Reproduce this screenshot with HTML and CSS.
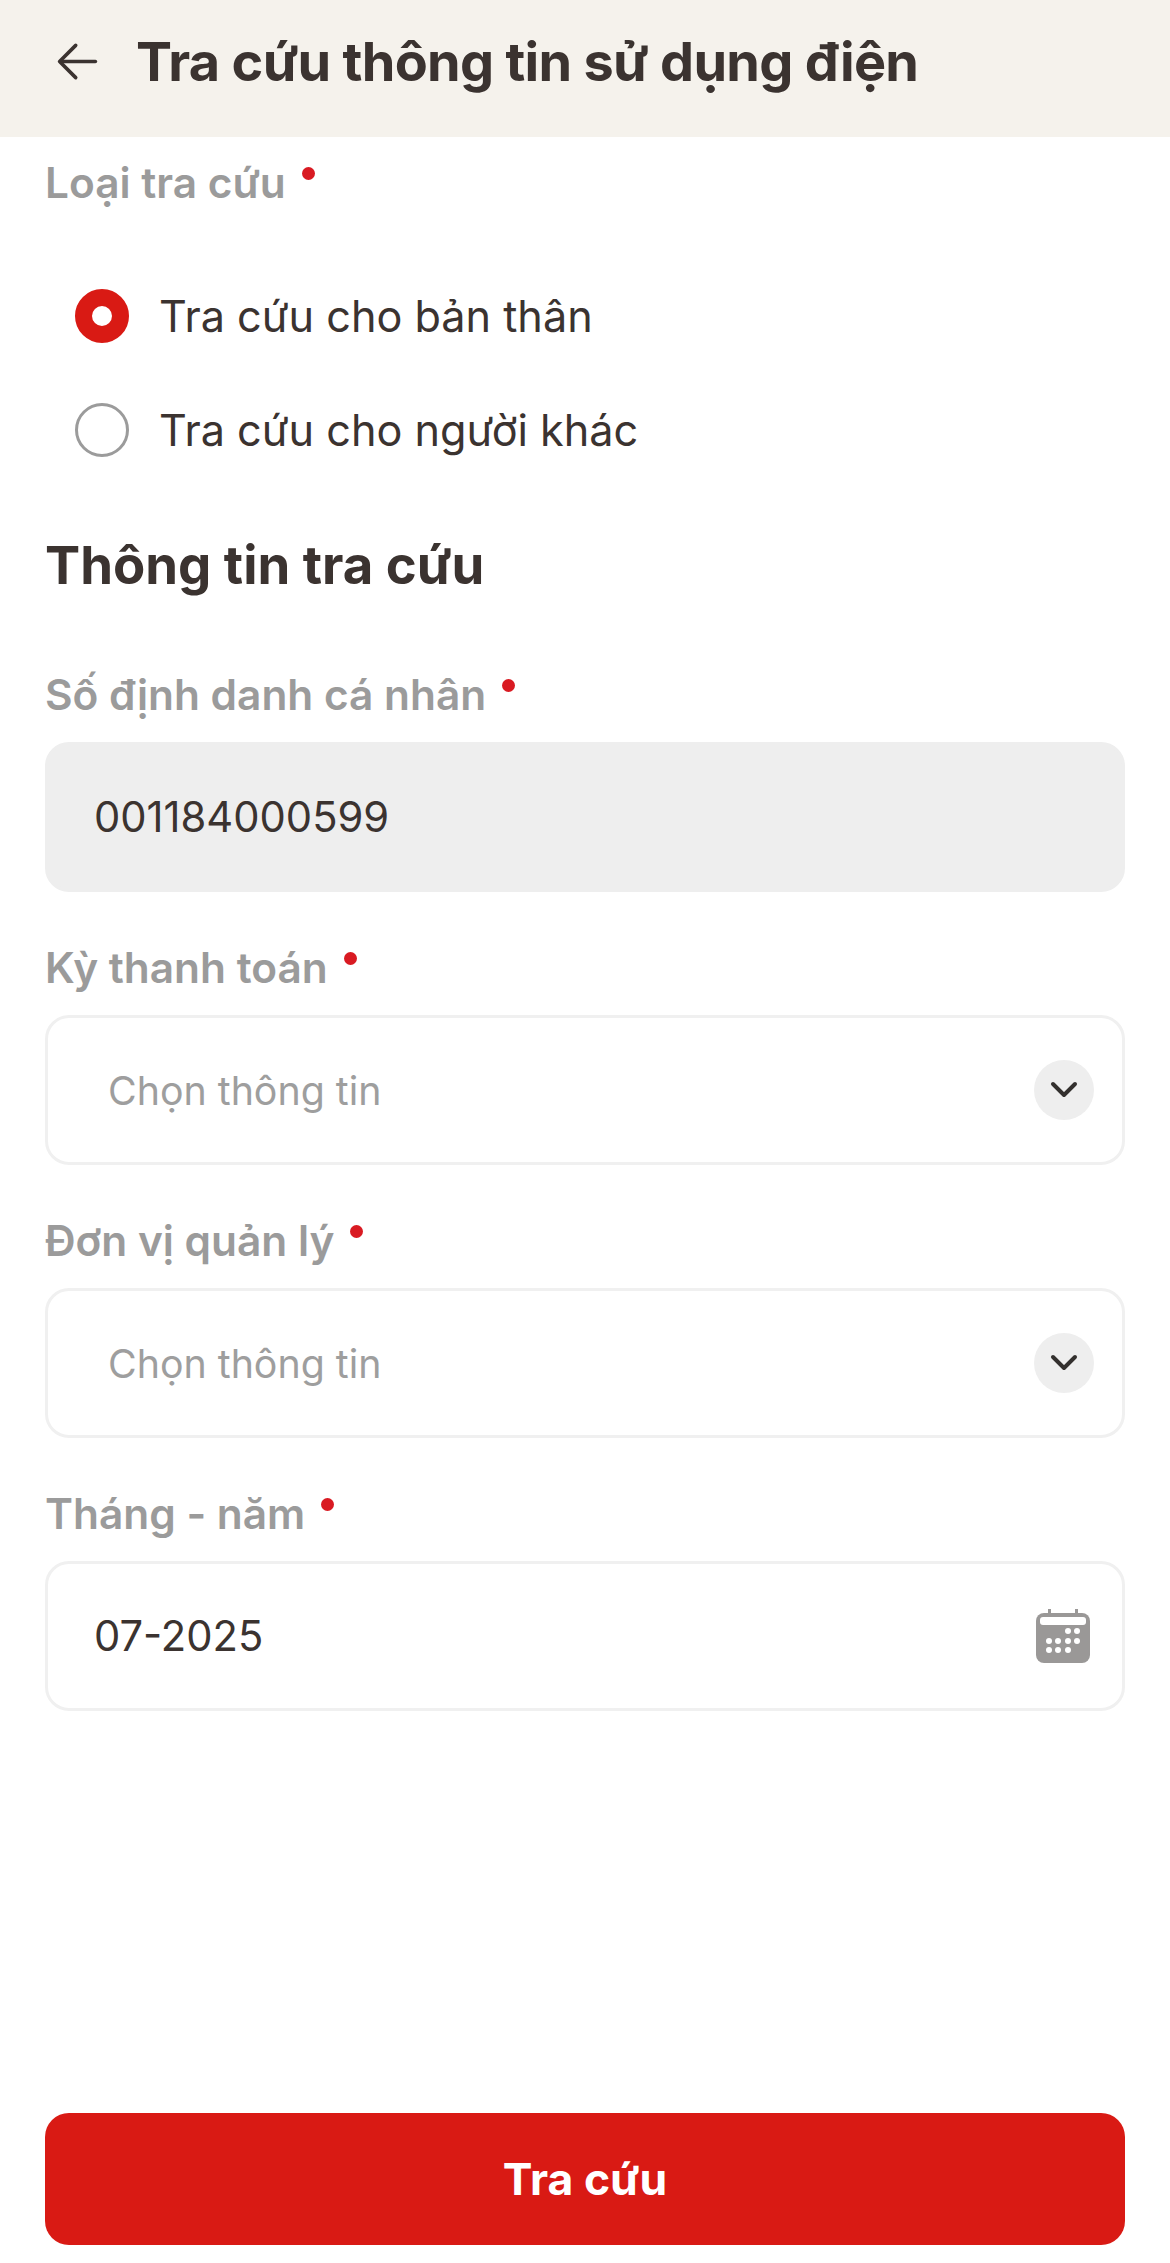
FILE: index.html
```html
<!DOCTYPE html>
<html lang="vi">
<head>
    <meta charset="UTF-8">
    <meta name="viewport" content="width=device-width, initial-scale=1.0">
    <title>Tra cứu thông tin sử dụng điện</title>
    <link rel="stylesheet" href="styles.css">
</head>
<body>
    <div class="page">
        <header class="header">
            <svg class="back" viewBox="0 0 48 48" fill="none" stroke="#3b3330" stroke-width="4" stroke-linecap="round" stroke-linejoin="round">
                <path d="M44 24H5"/>
                <path d="M22 6L4 24l18 18"/>
            </svg>
            <h1 class="title">Tra cứu thông tin sử dụng điện</h1>
        </header>

        <main class="content">
            <div class="label label-first">Loại tra cứu<span class="req"></span></div>
            <div class="radios">
                <div class="radio-row">
                    <span class="radio radio-on"></span>
                    <span class="radio-text">Tra cứu cho bản thân</span>
                </div>
                <div class="radio-row">
                    <span class="radio"></span>
                    <span class="radio-text">Tra cứu cho người khác</span>
                </div>
            </div>

            <h2 class="section">Thông tin tra cứu</h2>

            <div class="group">
                <div class="label">Số định danh cá nhân<span class="req"></span></div>
                <div class="field field-disabled"><span class="value">001184000599</span></div>
            </div>
            <div class="group">
                <div class="label">Kỳ thanh toán<span class="req"></span></div>
                <div class="field">
                    <span class="placeholder">Chọn thông tin</span>
                    <span class="chevron">
                        <svg viewBox="0 0 28 18" fill="none" stroke="#33302e" stroke-width="4" stroke-linecap="round" stroke-linejoin="round"><path d="M3 3l11 11L25 3"/></svg>
                    </span>
                </div>
            </div>
            <div class="group">
                <div class="label">Đơn vị quản lý<span class="req"></span></div>
                <div class="field">
                    <span class="placeholder">Chọn thông tin</span>
                    <span class="chevron">
                        <svg viewBox="0 0 28 18" fill="none" stroke="#33302e" stroke-width="4" stroke-linecap="round" stroke-linejoin="round"><path d="M3 3l11 11L25 3"/></svg>
                    </span>
                </div>
            </div>
            <div class="group">
                <div class="label">Tháng - năm<span class="req"></span></div>
                <div class="field">
                    <span class="value">07-2025</span>
                    <svg class="calendar" viewBox="0 0 54 54">
                        <path d="M12 0h3v6h-3zM39 0h3v6h-3z" fill="#9a9897"/>
                        <rect y="4" width="54" height="50" rx="8" fill="#9a9897"/>
                        <rect x="4" y="8" width="46" height="8" rx="3" fill="#fff"/>
                        <g fill="#fff">
                            <circle cx="32" cy="22" r="3"/><circle cx="41" cy="22" r="3"/>
                            <circle cx="13" cy="32" r="3"/><circle cx="22" cy="32" r="3"/><circle cx="32" cy="32" r="3"/><circle cx="41" cy="32" r="3"/>
                            <circle cx="13" cy="41" r="3"/><circle cx="22" cy="41" r="3"/><circle cx="32" cy="41" r="3"/>
                        </g>
                    </svg>
                </div>
            </div>
        </main>

        <div class="footer">
            <button class="submit">Tra cứu</button>
        </div>
    </div>
</body>
</html>
```
FILE: styles.css
```css
* {
    box-sizing: border-box;
}
html, body {
    margin: 0;
    height: 100%;
}
body {
    background: #fff;
    color: #3b3330;
    font-family: Inter, "Liberation Sans", sans-serif;
}
.page {
    height: 2263px;
    display: flex;
    flex-direction: column;
}
.header {
    height: 137px;
    background: #f5f2ec;
    display: flex;
    align-items: center;
    padding: 0 45px 14px 56px;
    gap: 37px;
}
.back {
    width: 43px;
    height: 43px;
    flex: none;
}
.title {
    margin: 0;
    font-size: 54px;
    font-weight: 700;
    letter-spacing: -0.7px;
    line-height: 64px;
    white-space: nowrap;
}
.content {
    flex: 1;
    padding: 0 45px;
}
.label {
    height: 48px;
    line-height: 48px;
    font-size: 42.4px;
    font-weight: 600;
    color: #9b9b9b;
    display: flex;
    align-items: flex-start;
    margin-bottom: 23px;
}
.label-first {
    margin-top: 22px;
    margin-bottom: 0;
}
.req {
    width: 13px;
    height: 13px;
    border-radius: 50%;
    background: #d91a22;
    margin: 8px 0 0 16px;
    flex: none;
}
.radios {
    padding: 82px 0 0 30px;
    display: flex;
    flex-direction: column;
    gap: 60px;
}
.radio-row {
    display: flex;
    align-items: center;
    height: 54px;
    gap: 30px;
}
.radio {
    width: 54px;
    height: 54px;
    border-radius: 50%;
    border: 3px solid #9b9b9b;
    flex: none;
}
.radio-on {
    border: 17px solid #d91a14;
}
.radio-text {
    font-size: 43.2px;
}
.section {
    margin: 78px 0 76px;
    font-size: 52.7px;
    line-height: 60px;
    font-weight: 700;
}
.group {
    margin-bottom: 52px;
}
.field {
    height: 150px;
    border: 3px solid #f0f0f0;
    border-radius: 24px;
    display: flex;
    align-items: center;
    justify-content: space-between;
    padding: 0 28px 0 46px;
}
.field-disabled {
    background: #eeeeee;
    border-color: #eeeeee;
}
.value {
    font-size: 41.7px;
}
.placeholder {
    font-size: 39.3px;
    color: #9e9e9e;
    margin-left: 14px;
}
.chevron {
    width: 60px;
    height: 60px;
    border-radius: 50%;
    background: #eeeeee;
    display: flex;
    align-items: center;
    justify-content: center;
}
.chevron svg {
    width: 28px;
    height: 18px;
}
.calendar {
    width: 54px;
    height: 54px;
    margin-right: 4px;
}
.footer {
    padding: 0 45px 18px;
}
.submit {
    display: block;
    width: 100%;
    height: 132px;
    border: 0;
    border-radius: 24px;
    background: #d91a14;
    color: #fff;
    font-family: inherit;
    font-size: 44.5px;
    font-weight: 700;
}
```
